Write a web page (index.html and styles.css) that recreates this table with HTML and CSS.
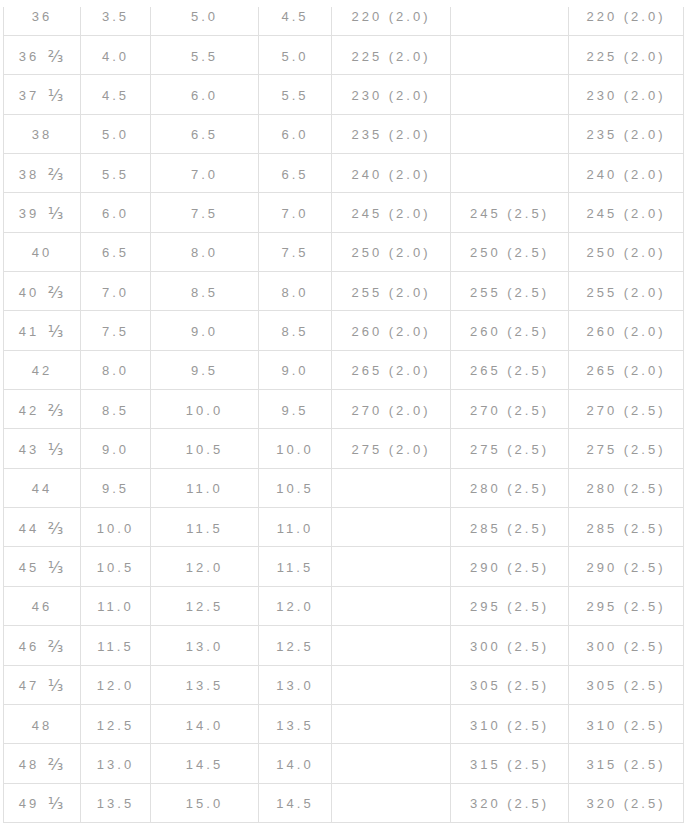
FILE: index.html
```html
<!DOCTYPE html>
<html>
<head>
<meta charset="utf-8">
<link rel="stylesheet" href="styles.css">
</head>
<body>
<div class="size-table">
  <div class="cell first">36</div><div class="cell first">3.5</div><div class="cell first">5.0</div><div class="cell first">4.5</div><div class="cell first">220 (2.0)</div><div class="cell first"></div><div class="cell first">220 (2.0)</div>
  <div class="cell">36 <span class="frac">⅔</span></div><div class="cell">4.0</div><div class="cell">5.5</div><div class="cell">5.0</div><div class="cell">225 (2.0)</div><div class="cell"></div><div class="cell">225 (2.0)</div>
  <div class="cell">37 <span class="frac">⅓</span></div><div class="cell">4.5</div><div class="cell">6.0</div><div class="cell">5.5</div><div class="cell">230 (2.0)</div><div class="cell"></div><div class="cell">230 (2.0)</div>
  <div class="cell">38</div><div class="cell">5.0</div><div class="cell">6.5</div><div class="cell">6.0</div><div class="cell">235 (2.0)</div><div class="cell"></div><div class="cell">235 (2.0)</div>
  <div class="cell">38 <span class="frac">⅔</span></div><div class="cell">5.5</div><div class="cell">7.0</div><div class="cell">6.5</div><div class="cell">240 (2.0)</div><div class="cell"></div><div class="cell">240 (2.0)</div>
  <div class="cell">39 <span class="frac">⅓</span></div><div class="cell">6.0</div><div class="cell">7.5</div><div class="cell">7.0</div><div class="cell">245 (2.0)</div><div class="cell">245 (2.5)</div><div class="cell">245 (2.0)</div>
  <div class="cell">40</div><div class="cell">6.5</div><div class="cell">8.0</div><div class="cell">7.5</div><div class="cell">250 (2.0)</div><div class="cell">250 (2.5)</div><div class="cell">250 (2.0)</div>
  <div class="cell">40 <span class="frac">⅔</span></div><div class="cell">7.0</div><div class="cell">8.5</div><div class="cell">8.0</div><div class="cell">255 (2.0)</div><div class="cell">255 (2.5)</div><div class="cell">255 (2.0)</div>
  <div class="cell">41 <span class="frac">⅓</span></div><div class="cell">7.5</div><div class="cell">9.0</div><div class="cell">8.5</div><div class="cell">260 (2.0)</div><div class="cell">260 (2.5)</div><div class="cell">260 (2.0)</div>
  <div class="cell">42</div><div class="cell">8.0</div><div class="cell">9.5</div><div class="cell">9.0</div><div class="cell">265 (2.0)</div><div class="cell">265 (2.5)</div><div class="cell">265 (2.0)</div>
  <div class="cell">42 <span class="frac">⅔</span></div><div class="cell">8.5</div><div class="cell">10.0</div><div class="cell">9.5</div><div class="cell">270 (2.0)</div><div class="cell">270 (2.5)</div><div class="cell">270 (2.5)</div>
  <div class="cell">43 <span class="frac">⅓</span></div><div class="cell">9.0</div><div class="cell">10.5</div><div class="cell">10.0</div><div class="cell">275 (2.0)</div><div class="cell">275 (2.5)</div><div class="cell">275 (2.5)</div>
  <div class="cell">44</div><div class="cell">9.5</div><div class="cell">11.0</div><div class="cell">10.5</div><div class="cell"></div><div class="cell">280 (2.5)</div><div class="cell">280 (2.5)</div>
  <div class="cell">44 <span class="frac">⅔</span></div><div class="cell">10.0</div><div class="cell">11.5</div><div class="cell">11.0</div><div class="cell"></div><div class="cell">285 (2.5)</div><div class="cell">285 (2.5)</div>
  <div class="cell">45 <span class="frac">⅓</span></div><div class="cell">10.5</div><div class="cell">12.0</div><div class="cell">11.5</div><div class="cell"></div><div class="cell">290 (2.5)</div><div class="cell">290 (2.5)</div>
  <div class="cell">46</div><div class="cell">11.0</div><div class="cell">12.5</div><div class="cell">12.0</div><div class="cell"></div><div class="cell">295 (2.5)</div><div class="cell">295 (2.5)</div>
  <div class="cell">46 <span class="frac">⅔</span></div><div class="cell">11.5</div><div class="cell">13.0</div><div class="cell">12.5</div><div class="cell"></div><div class="cell">300 (2.5)</div><div class="cell">300 (2.5)</div>
  <div class="cell">47 <span class="frac">⅓</span></div><div class="cell">12.0</div><div class="cell">13.5</div><div class="cell">13.0</div><div class="cell"></div><div class="cell">305 (2.5)</div><div class="cell">305 (2.5)</div>
  <div class="cell">48</div><div class="cell">12.5</div><div class="cell">14.0</div><div class="cell">13.5</div><div class="cell"></div><div class="cell">310 (2.5)</div><div class="cell">310 (2.5)</div>
  <div class="cell">48 <span class="frac">⅔</span></div><div class="cell">13.0</div><div class="cell">14.5</div><div class="cell">14.0</div><div class="cell"></div><div class="cell">315 (2.5)</div><div class="cell">315 (2.5)</div>
  <div class="cell">49 <span class="frac">⅓</span></div><div class="cell">13.5</div><div class="cell">15.0</div><div class="cell">14.5</div><div class="cell"></div><div class="cell">320 (2.5)</div><div class="cell">320 (2.5)</div>
</div>
</body>
</html>
```
FILE: styles.css
```css
html, body {
  margin: 0;
  padding: 0;
  background: #ffffff;
}

.size-table {
  display: grid;
  grid-template-columns: 76px 69px 107px 72px 118px 117px 114px;
  grid-template-rows: 28px;
  grid-auto-rows: 38.35px;
  gap: 1px;
  padding: 0 1px 1px 1px;
  margin: 7px 0 0 3px;
  width: max-content;
  background: #e0e0e0;
}

.cell {
  background: #ffffff;
  display: flex;
  align-items: center;
  justify-content: center;
  padding-top: 2px;
  box-sizing: border-box;
  font-family: "Liberation Sans", Arial, sans-serif;
  font-size: 13px;
  line-height: 15px;
  letter-spacing: 3px;
  color: #999999;
  white-space: pre;
}

.cell.first {
  align-items: flex-start;
  padding-top: 2px;
}

.frac {
  font-family: "DejaVu Sans", sans-serif;
  font-size: 16px;
  letter-spacing: 0;
  margin-left: 2px;
  margin-right: 2px;
}
```
